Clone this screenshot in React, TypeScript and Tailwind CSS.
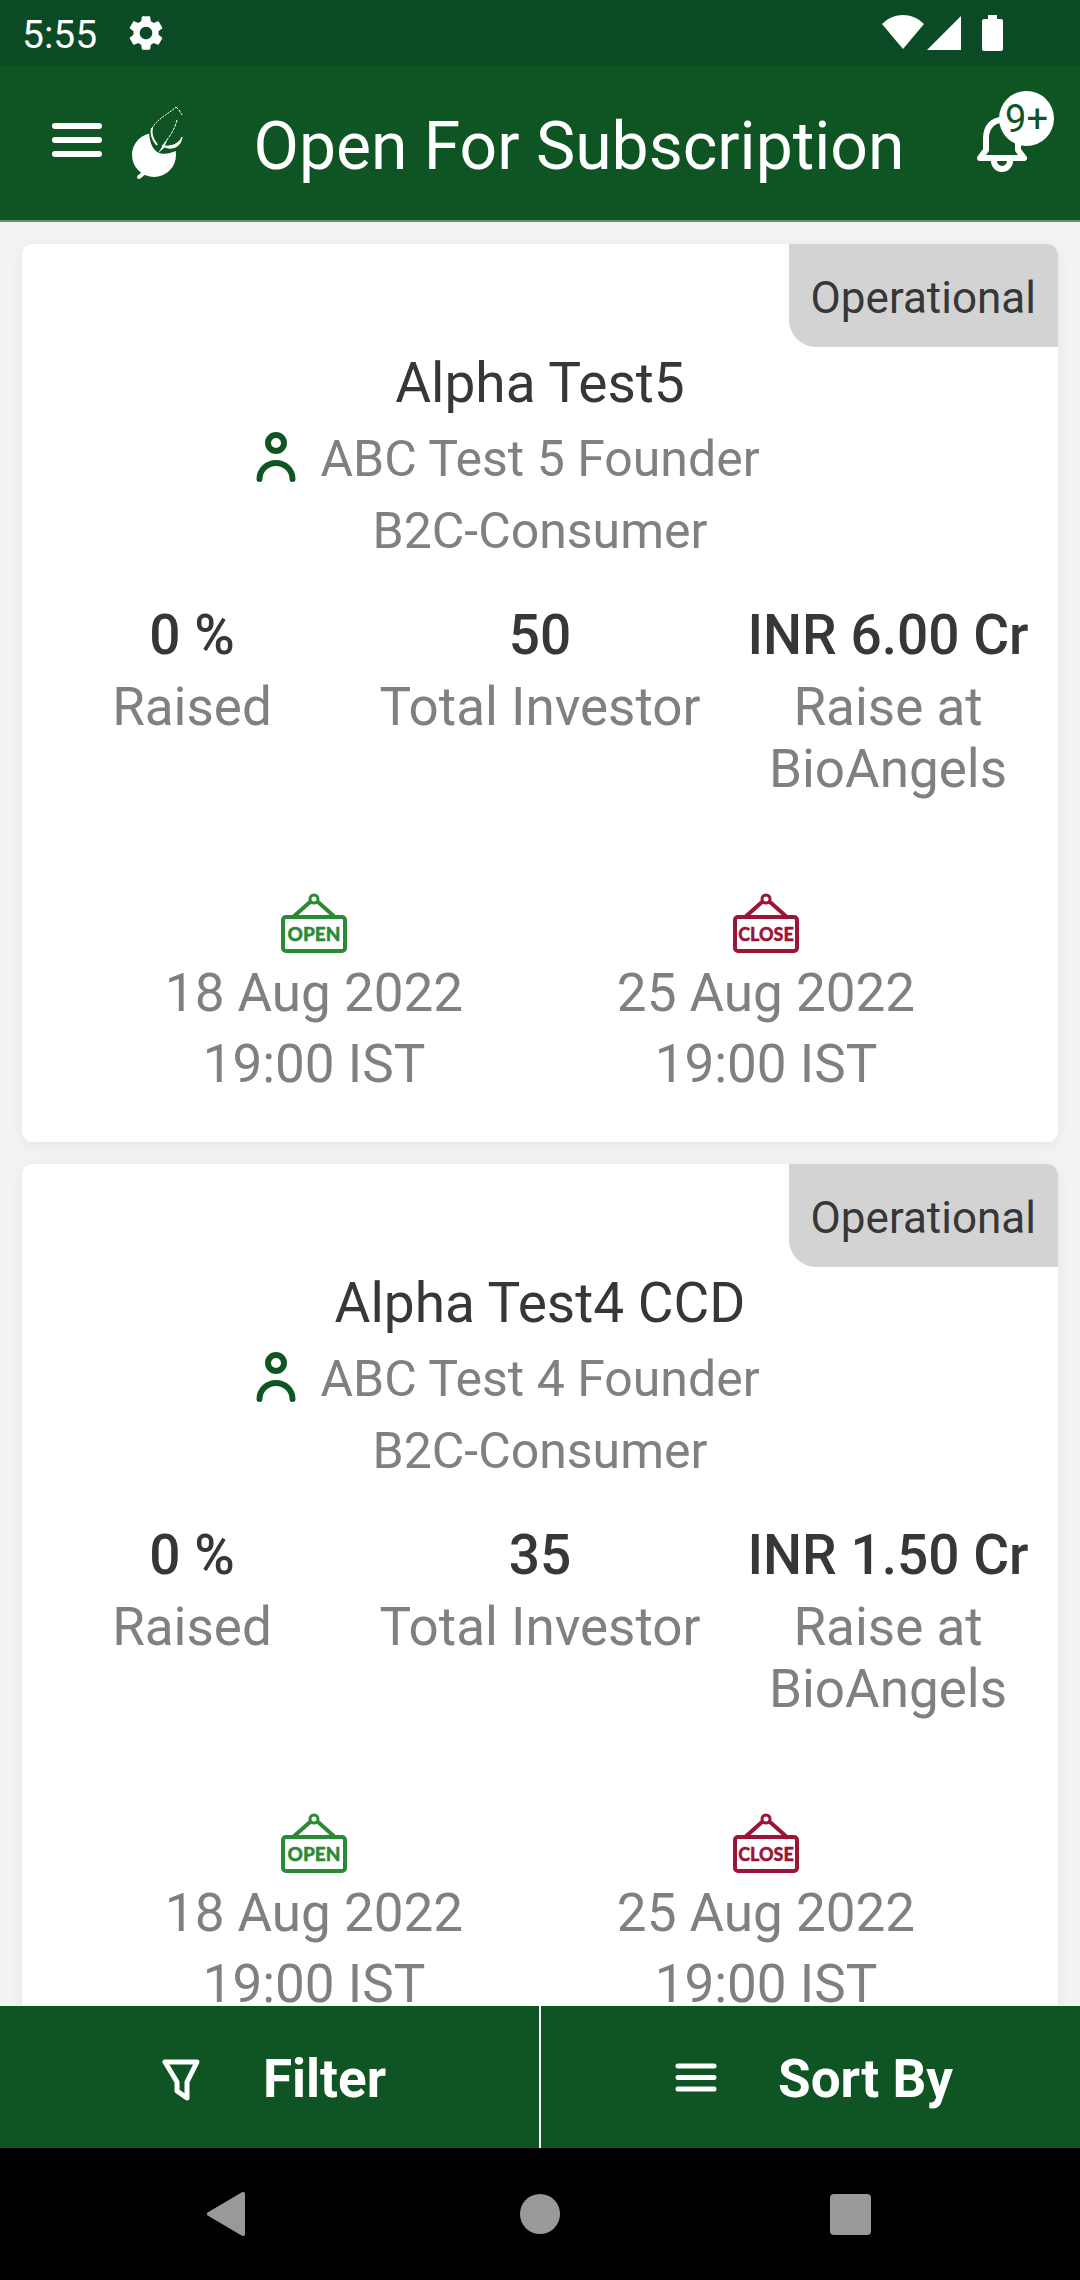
import { MdSettings } from "react-icons/md";

const deals = [
  {
    id: 5,
    name: "Alpha Test5",
    founder: "ABC Test 5 Founder",
    sector: "B2C-Consumer",
    stage: "Operational",
    raised: "0 %",
    investors: "50",
    target: "INR 6.00 Cr",
    openDate: "18 Aug 2022",
    closeDate: "25 Aug 2022",
    time: "19:00 IST",
  },
  {
    id: 4,
    name: "Alpha Test4 CCD",
    founder: "ABC Test 4 Founder",
    sector: "B2C-Consumer",
    stage: "Operational",
    raised: "0 %",
    investors: "35",
    target: "INR 1.50 Cr",
    openDate: "18 Aug 2022",
    closeDate: "25 Aug 2022",
    time: "19:00 IST",
  },
];

type Deal = (typeof deals)[number];

function StatusBar() {
  return (
    <div className="flex h-[66px] shrink-0 items-center justify-between bg-[#0a4a24] pl-[22px] pr-[76px] text-white">
      <div className="flex items-center gap-7">
        <span className="pt-1 text-[39px] leading-none">5:55</span>
        <MdSettings className="size-[42px]" />
      </div>
      <svg className="h-9 w-[122px]" viewBox="0 0 122 36" fill="currentColor">
        <path d="M0 9C12-3 30-3 42 9L21 34Z" />
        <path d="M79 1v34H45z" />
        <path d="M106 0h9v4h4q2 0 2 2v28q0 2-2 2h-17q-2 0-2-2V6q0-2 2-2h4z" />
      </svg>
    </div>
  );
}

function Logo() {
  return (
    <svg className="h-[76px] w-[54px]" viewBox="0 0 54 76" fill="none" stroke="#fff">
      <circle cx="24" cy="50" r="22" fill="#fff" stroke="none" />
      <path d="M14 68l-5 4" strokeWidth="4" strokeLinecap="round" />
      <path
        d="M19 25C19 36 22 43 27 47C32 50 40 49 48 45V20H19z"
        fill="#0f5523"
        stroke="none"
      />
      <path d="M46 2C40 8 25 15 22 24" strokeWidth="1" strokeDasharray="2 1" />
      <path d="M46 2L49 5L52 10" strokeWidth="1" strokeDasharray="3 1" />
      <path d="M22 23C20 30 23 35 27 40" strokeWidth="2" />
      <path d="M47 15C45 24 39 33 32 41" strokeWidth="1" strokeDasharray="3 1" />
      <path d="M38 33L28 48L34 43z" fill="#fff" stroke="none" />
      <path d="M52 32C49 39 42 42 32 41C42 46 51 42 52 32z" fill="#fff" strokeWidth="1" />
    </svg>
  );
}

function Header() {
  return (
    <header className="flex h-[156px] shrink-0 items-center border-b-2 border-[#6f8f78] bg-[#0f5523] pl-[49px] pr-[26px] text-white">
      <button aria-label="Menu" className="pb-1">
        <svg className="h-10 w-14" viewBox="0 0 56 40" stroke="currentColor" strokeWidth="6" strokeLinecap="round">
          <path d="M6 5h44M6 19h44M6 33h44" />
        </svg>
      </button>
      <div className="ml-[25px]">
        <Logo />
      </div>
      <h1 className="flex-1 pt-2 text-center text-[66px] leading-none">Open For Subscription</h1>
      <button aria-label="Notifications" className="relative">
        <svg
          className="h-[60px] w-20"
          viewBox="0 0 80 60"
          fill="none"
          stroke="currentColor"
          strokeWidth="6"
          strokeLinecap="round"
          strokeLinejoin="round"
        >
          <path d="M6 45L12 37V25C12 14 19 7 28 7S44 14 44 25V37L50 45Z" />
          <path d="M20 48a8 8 0 0 0 16 0" />
        </svg>
        <span className="absolute -top-[22px] right-0 flex size-[55px] items-center justify-center rounded-full bg-white text-[38px] leading-none text-[#0f5523]">
          9+
        </span>
      </button>
    </header>
  );
}

function Sign({ label, size }: { label: string; size: number }) {
  return (
    <svg className="h-[66px] w-[68px]" viewBox="0 0 68 66" fill="none" stroke="currentColor" strokeWidth="4">
      <rect x="3" y="25" width="62" height="34" rx="3" />
      <circle cx="34" cy="7" r="4" strokeWidth="3" />
      <path d="M30 10L12 26M38 10l18 16" />
      <text
        x="34"
        y="49"
        textAnchor="middle"
        fill="currentColor"
        strokeWidth="0.4"
        fontFamily="Lato, sans-serif"
        fontWeight="900"
        fontSize={size}
      >
        {label}
      </text>
    </svg>
  );
}

function Stat({ value, label }: { value: string; label: string }) {
  return (
    <div className="flex flex-col gap-[5px] text-center">
      <p className="text-[55px] font-medium leading-[72px] text-[#373737]">{value}</p>
      <p className="leading-[62px]">{label}</p>
    </div>
  );
}

function DealCard({ deal }: { deal: Deal }) {
  return (
    <article className="flex shrink-0 flex-col overflow-hidden rounded-[11px] bg-white pb-[42px] text-[53px] leading-[72px] text-[#808080] shadow-[0_4px_16px_rgba(0,0,0,0.06)]">
      <span className="self-end rounded-bl-[27px] bg-[#d3d3d3] px-[22px] pb-[13px] pt-[18px] text-[44px] text-[#373737]">
        {deal.stage}
      </span>
      <h2 className="text-center text-[55px] text-[#373737]">{deal.name}</h2>
      <div className="mt-1 grid grid-cols-[1fr_auto_1fr] items-center text-[50px]">
        <svg
          className="mr-4 size-14 justify-self-end text-[#0f5523]"
          viewBox="0 0 56 56"
          fill="none"
          stroke="currentColor"
          strokeWidth="6"
          strokeLinecap="round"
        >
          <circle cx="28" cy="12" r="8" />
          <path d="M11.5 48a16.5 16 0 0 1 33 0" />
        </svg>
        <p>{deal.founder}</p>
      </div>
      <p className="text-center text-[50px]">{deal.sector}</p>

      <div className="mt-8 grid grid-cols-3 gap-2">
        <Stat value={deal.raised} label="Raised" />
        <Stat value={deal.investors} label="Total Investor" />
        <Stat value={deal.target} label="Raise at BioAngels" />
      </div>

      <div className="mt-[92px] grid grid-cols-2 px-[66px] text-center leading-[71px]">
        <div className="flex flex-col items-center">
          <span className="text-[#2b8a36]">
            <Sign label="OPEN" size={19} />
          </span>
          <p>{deal.openDate}</p>
          <p>{deal.time}</p>
        </div>
        <div className="flex flex-col items-center">
          <span className="text-[#9c1537]">
            <Sign label="CLOSE" size={18} />
          </span>
          <p>{deal.closeDate}</p>
          <p>{deal.time}</p>
        </div>
      </div>
    </article>
  );
}

function BottomBar() {
  return (
    <div className="flex h-[142px] shrink-0 bg-[#0f5523] text-[53px] font-bold text-white">
      <button className="flex flex-1 items-center justify-center gap-[60px] pl-1.5 pt-1.5">
        <svg
          className="size-11"
          viewBox="0 0 44 44"
          fill="none"
          stroke="currentColor"
          strokeWidth="5"
          strokeLinejoin="round"
        >
          <path d="M6 4H38L28 24V40L18 33V24Z" />
        </svg>
        Filter
      </button>
      <span className="w-0.5 bg-white" />
      <button className="flex flex-1 items-center justify-center gap-[60px] pl-1.5 pt-1.5">
        <svg className="size-11" viewBox="0 0 44 44" stroke="currentColor" strokeWidth="5" strokeLinecap="round">
          <path d="M4 8h36M4 19.5h36M4 31h36" />
        </svg>
        Sort By
      </button>
    </div>
  );
}

function SystemNav() {
  return (
    <nav className="grid h-[132px] shrink-0 grid-cols-3 bg-black px-[74px] text-[#999999]">
      <button aria-label="Back" className="flex items-center justify-center">
        <svg className="size-11" viewBox="0 0 44 44" fill="currentColor" stroke="currentColor" strokeWidth="4" strokeLinejoin="round">
          <path d="M36 2V42L2 22Z" />
        </svg>
      </button>
      <button aria-label="Home" className="flex items-center justify-center">
        <span className="size-10 rounded-full bg-current" />
      </button>
      <button aria-label="Recents" className="flex items-center justify-center">
        <span className="size-[41px] rounded bg-current" />
      </button>
    </nav>
  );
}

export default function App() {
  return (
    <div className="flex h-screen flex-col bg-[#f3f3f3] font-[Roboto,sans-serif]">
      <StatusBar />
      <Header />
      <main className="flex min-h-0 flex-1 flex-col gap-[22px] overflow-y-auto p-[22px] [scrollbar-width:none]">
        {deals.map((deal) => (
          <DealCard key={deal.id} deal={deal} />
        ))}
      </main>
      <BottomBar />
      <SystemNav />
    </div>
  );
}
